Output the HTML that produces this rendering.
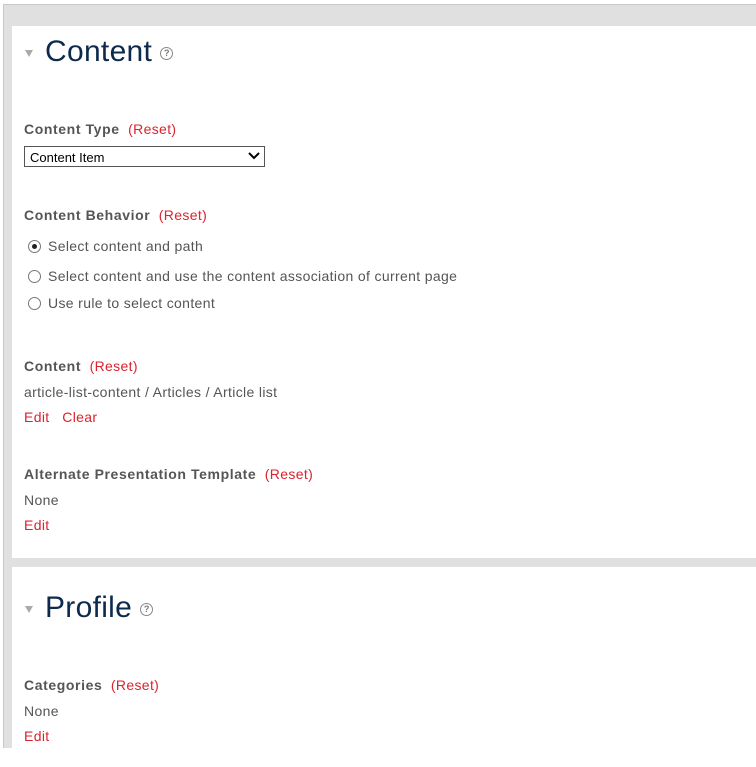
<!DOCTYPE html>
<html><head><style>
body{margin:0;width:756px;height:748px;overflow:hidden;background:#fff;font-family:"Liberation Sans",Arial,sans-serif;position:relative}
.bg{position:absolute;left:3px;top:4px;right:0;bottom:0;background:#e0e0e0;border-left:1px solid #c8c8c8;border-top:1px solid #c8c8c8}
.panel{position:absolute;left:12px;right:0;background:#fff}
.h{position:absolute;left:45px;font-size:30px;color:#0d2a4d;letter-spacing:0.3px;font-family:"Liberation Sans",sans-serif;font-weight:normal}
.tri{position:absolute;width:0;height:0;border-left:4px solid transparent;border-right:4px solid transparent;border-top:7px solid #aaa}
.q{display:inline-block;width:11px;height:11px;border:1px solid #888;border-radius:50%;font-size:9px;line-height:11px;text-align:center;color:#777;vertical-align:middle;margin-left:8px;letter-spacing:0;font-weight:bold}
.t{position:absolute;left:24px;font-size:14px;color:#555;letter-spacing:0.35px}
.b{font-weight:bold;color:#555;letter-spacing:0.6px}
.r{color:#d9232e}
.sel{position:absolute;left:24px;top:146px;width:241px;height:21px;border:1px solid #555;font-size:13px;color:#000;box-sizing:border-box;padding:3px 5px}
.rad{display:inline-block;width:13px;height:13px;border:1px solid #777;border-radius:50%;vertical-align:-2px;margin-right:7px;position:relative;box-sizing:border-box;background:#fff}
.rad.on::after{content:"";position:absolute;left:3px;top:3px;width:5px;height:5px;border-radius:50%;background:#222}
</style></head><body>
<div class="bg"></div>
<div class="panel" style="top:26px;height:532px"></div>
<div class="panel" style="top:567px;height:200px"></div>
<div class="tri" style="left:25px;top:50px"></div>
<div class="h" style="top:35px">Content<span class="q">?</span></div>
<div class="t" style="top:121px"><span class="b">Content Type</span> &nbsp;<span class="r">(Reset)</span></div>
<div class="sel">Content Item<svg style="position:absolute;right:4px;top:5px" width="12" height="8" viewBox="0 0 12 8"><path d="M1 1l5 5 5-5" stroke="#000" stroke-width="2" fill="none"/></svg></div>
<div class="t" style="top:207px"><span class="b">Content Behavior</span> &nbsp;<span class="r">(Reset)</span></div>
<div class="t" style="top:238px;left:28px"><span class="rad on"></span>Select content and path</div>
<div class="t" style="top:268px;left:28px"><span class="rad"></span>Select content and use the content association of current page</div>
<div class="t" style="top:295px;left:28px"><span class="rad"></span>Use rule to select content</div>
<div class="t" style="top:358px"><span class="b">Content</span> &nbsp;<span class="r">(Reset)</span></div>
<div class="t" style="top:384px">article-list-content / Articles / Article list</div>
<div class="t r" style="top:409px;color:#d9232e">Edit &nbsp; Clear</div>
<div class="t" style="top:466px"><span class="b">Alternate Presentation Template</span> &nbsp;<span class="r">(Reset)</span></div>
<div class="t" style="top:492px">None</div>
<div class="t" style="top:517px;color:#d9232e">Edit</div>
<div class="tri" style="left:25px;top:606px"></div>
<div class="h" style="top:591px">Profile<span class="q">?</span></div>
<div class="t" style="top:677px"><span class="b">Categories</span> &nbsp;<span class="r">(Reset)</span></div>
<div class="t" style="top:703px">None</div>
<div class="t" style="top:728px;color:#d9232e">Edit</div>
</body></html>
